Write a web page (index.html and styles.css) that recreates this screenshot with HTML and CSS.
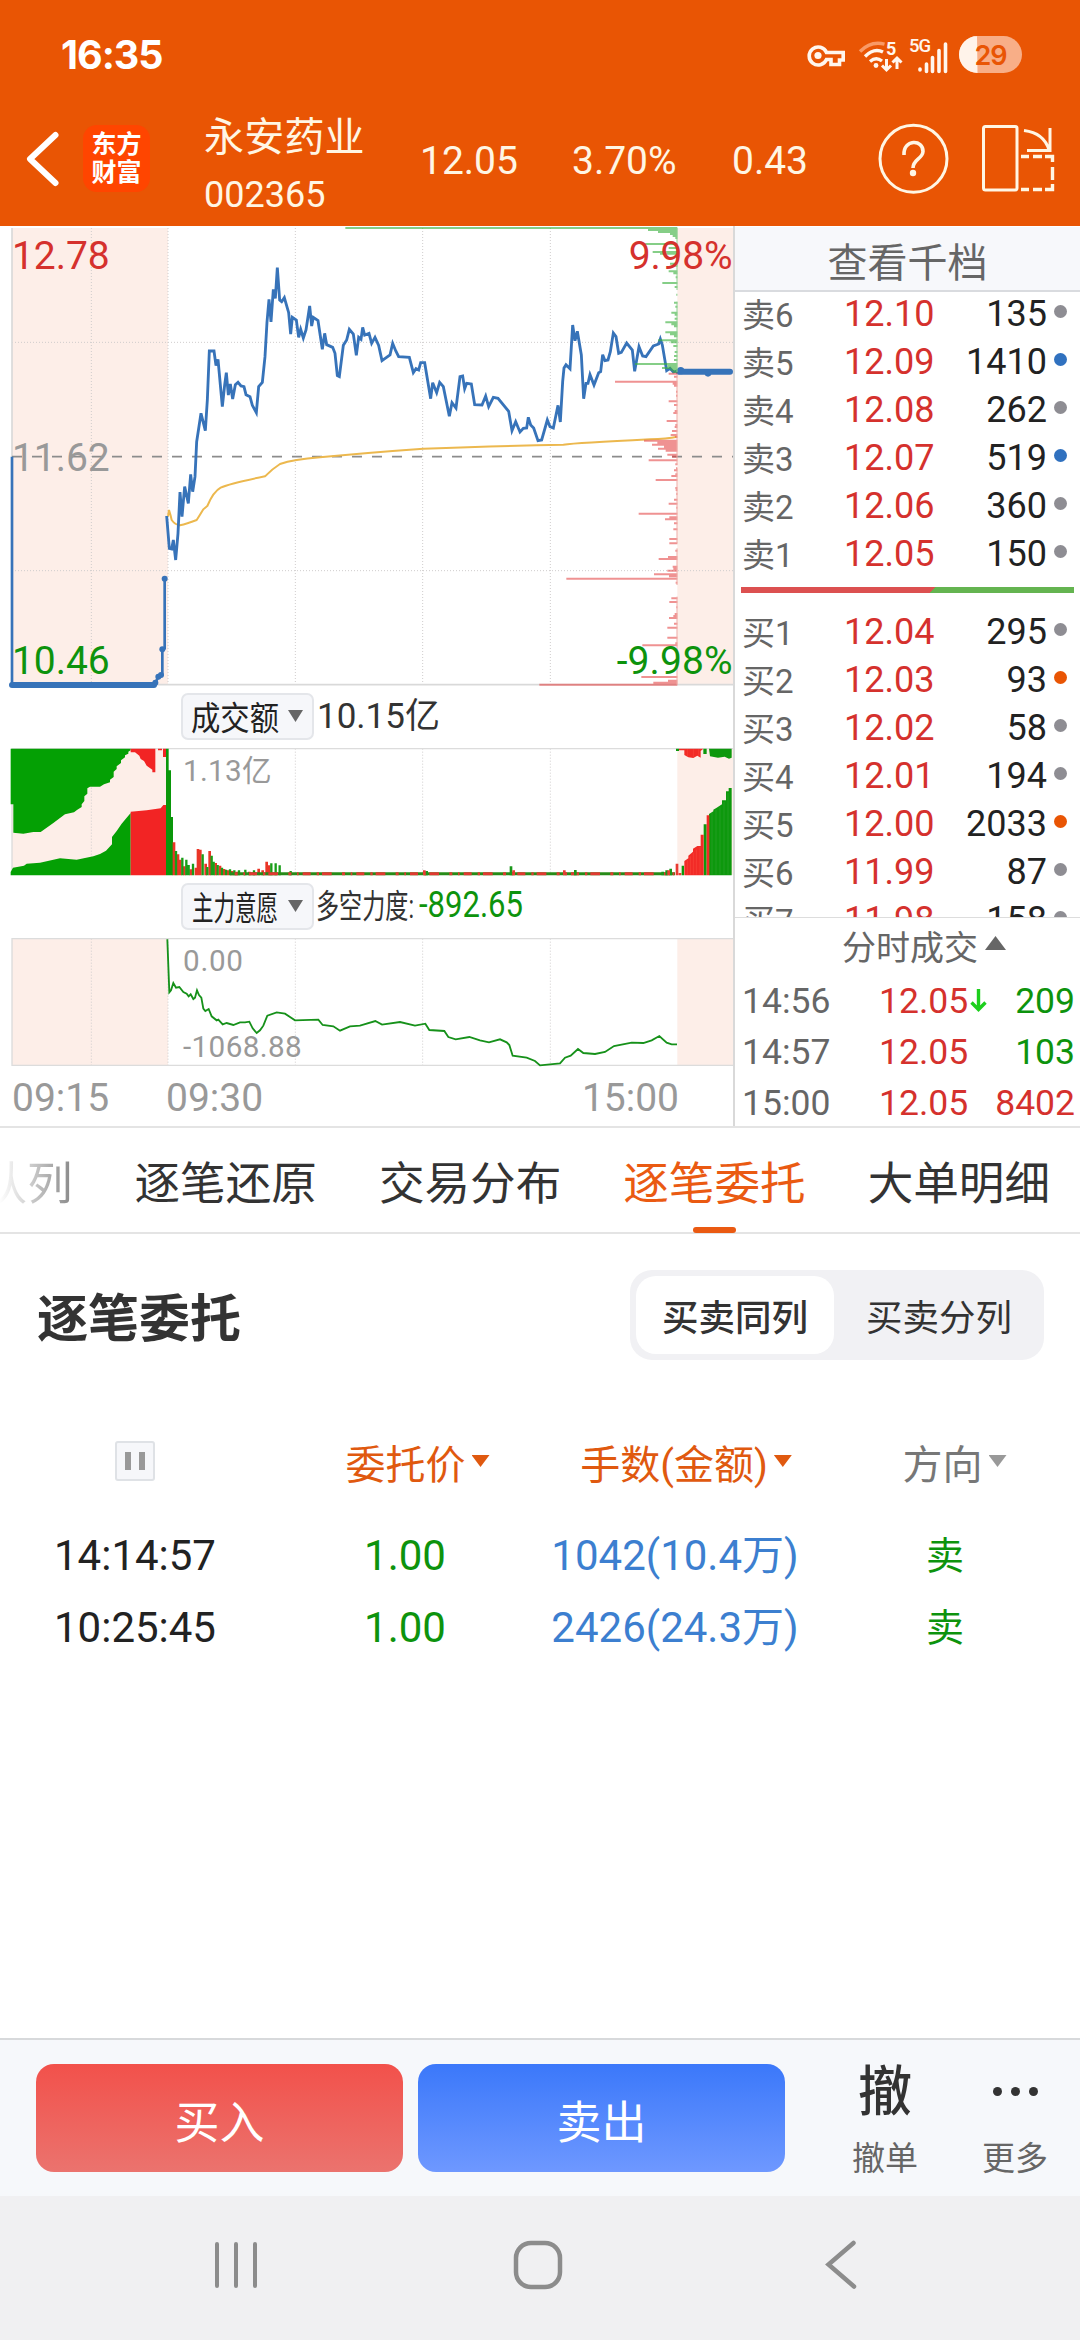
FILE: index.html
```html
<!DOCTYPE html>
<html lang="zh-CN">
<head>
<meta charset="utf-8">
<title>永安药业 002365</title>
<link rel="stylesheet" href="styles.css">
</head>
<body>
<div class="app">
  <header class="header">
    <div class="status">
      <span class="clock">16:35</span>
      <svg class="status-icons" width="220" height="44" viewBox="804 33 220 44">
        <g fill="none" stroke="#fff6ee" stroke-width="3.6">
          <path d="M826.500 52.500A9 9 0 1 0 826.500 59.500H831V64.500H839.500V60H843.200V52.500Z"/>
        </g>
        <circle cx="818" cy="55.500" r="3.600" fill="#fff6ee"/>
        <g fill="none" stroke-width="3.400">
          <path d="M860 51.500Q871 40.500 884.500 44.200" stroke="#f99a66"/>
          <path d="M865 56.500Q874 47.500 883 52" stroke="#fff6ee"/>
          <path d="M870 61.500Q876 56.500 882 61" stroke="#fff6ee"/>
          <path d="M886.500 59V69M882 65.500L886.500 70L891 65.500M897 69V59M892.500 62.500L897 58L901.500 62.500" stroke="#fff6ee" stroke-width="3"/>
        </g>
        <circle cx="876" cy="65.500" r="2.400" fill="#fff6ee"/>
        <g font-family="Roboto,sans-serif" font-weight="700" fill="#fff6ee">
          <text x="886" y="54.500" font-size="18">5</text>
          <text x="909" y="52" font-size="18.500" font-weight="500" textLength="22">5G</text>
        </g>
        <path d="M920 69V70M926.500 64V71.500M932.500 57.500V71.500M939 50.500V71.500M945.500 44V71.500" stroke="#fff6ee" stroke-width="3.600" stroke-linecap="round"/>
        <rect x="959" y="36" width="63" height="37" rx="18.500" fill="#f8ae87"/>
        <path d="M977 36H977.500A18.500 18.500 0 0 0 977.500 73Z" fill="#fff3ea"/>
        <text x="974.500" y="65" font-family="Inter,sans-serif" font-weight="600" font-size="27" fill="#e95504" textLength="33">29</text>
      </svg>
    </div>
    <div class="titlebar">
      <svg class="back" width="36" height="60" viewBox="25 129 36 60"><path d="M55.500 135L30 159L55.500 183" fill="none" stroke="#fff" stroke-width="6" stroke-linecap="round" stroke-linejoin="round"/></svg>
      <div class="logo"><span>东方</span><span>财富</span></div>
      <div class="stock"><span class="stock-name">永安药业</span><span class="stock-code">002365</span></div>
      <div class="quotes"><span class="q1">12.05</span><span class="q2">3.70%</span><span class="q3">0.43</span></div>
      <svg class="head-icons" width="180" height="76" viewBox="876 121 180 76">
        <g fill="none" stroke="#fff6e4" stroke-width="3">
          <circle cx="913.500" cy="158.800" r="33.500"/>
          <path d="M904 155C903 139 923.500 139 923 151.500C922.500 159 913 159 913 168" stroke-width="3.600"/>
          <rect x="983.500" y="126.500" width="33.500" height="63.500" rx="2"/>
          <path d="M1024 130.500Q1044 133 1049 150M1050 128V150.500H1027"/>
          <path d="M1021 156.500H1029M1033 156.500H1042M1045 156.500H1052.500V162M1052.500 167V180M1052.500 184V189.500H1045M1042 189.500H1033M1029 189.500H1021" stroke-width="3.400"/>
        </g>
        <circle cx="913" cy="173" r="3.200" fill="#fff6e4"/>
      </svg>
    </div>
  </header>

  <main class="market">
    <section class="charts">
      <svg class="plot" width="734" height="460" viewBox="0 21 2202 1380">
        <path d="M36 24H504V1394H36ZM2032 24H2199V1394H2032Z" fill="#fdeee8"/>
        <g class="grid"><path d="M274 24V1394M504 24V1394M886 24V1394M1268 24V1394M1651 24V1394M36 367H2199M36 1052H2199"/></g>
        <path d="M36 24V1394H2199" fill="none" stroke="#d9d9d9" stroke-width="5"/>
        <path d="M36 710H2199" stroke="#8c8c8c" stroke-width="5" stroke-dasharray="30 30"/>
        <path d="M504 890L507 870Q512 885 515 900Q525 914 540 916Q560 912 590 900Q600 885 610 868L622 858Q640 815 662 803Q690 790 795 769Q815 748 840 732Q880 718 960 712Q1100 698 1270 686Q1500 678 1690 674Q1730 669 1950 658Q2000 656 2032 650" fill="none" stroke="#ecb84e" stroke-width="6"/>
        <path d="M500 888L508 985L515 987L520 960L527 1020L534 940L540 816L546 890L554 800L565 850L572 763L578 815L585 770L590 665L603 580L616 632L622 540L628 393H642L648 437L654 418L667 560L674 495L679 458L685 525L691 492L698 537L706 494L714 487L723 498L732 500L738 524L750 530L757 556L769 578L776 500L787 487L795 410L801 306L807 238L813 306L820 208L826 235L832 143L839 240L845 245L853 233L866 278L872 342L877 292L889 300L896 352L902 328L910 354L918 330L929 258L935 318L940 292L954 302L967 388L974 340L980 374L998 382L1005 400L1012 467L1018 470L1030 376L1040 360L1048 328L1060 342L1069 406L1076 352L1083 358L1088 322L1094 345L1107 340L1115 370L1125 352L1136 376L1146 422L1170 405L1178 370L1187 392L1196 410L1228 412L1240 458L1248 446L1256 450L1262 428H1274L1292 536L1298 488L1310 518L1319 487L1330 500L1348 589L1356 548L1368 564L1380 470L1388 468L1394 506L1400 490L1414 492L1424 554L1446 555L1457 528L1466 560L1480 532L1494 535L1526 574L1536 632L1547 605L1560 636L1570 625L1580 624L1585 592L1592 615L1601 624L1614 662L1625 660L1642 600L1650 620L1660 624L1674 556L1681 606L1688 485L1692 444L1698 434L1710 446L1718 315L1725 362L1732 334L1744 405L1751 536L1758 490L1764 490L1770 464L1782 495L1796 458L1802 455L1808 404L1815 422L1824 420L1831 395L1840 339L1848 350L1856 400L1864 397L1880 369L1897 390L1904 454L1917 380L1928 408L1938 410L1960 378L1976 372L1981 357L1987 375L2000 452L2010 445L2020 456L2032 453" fill="none" stroke="#3773b9" stroke-width="8.500"/>
        <path d="M36 710V1394H462L476 1370L487 1364V1288L494 1285V1076" fill="none" stroke="#3773b9" stroke-width="8"/>
        <path d="M36 1395H462" stroke="#3773b9" stroke-width="18" stroke-linecap="round"/>
        <g fill="#3773b9"><circle cx="466" cy="1388" r="9"/><circle cx="475" cy="1370" r="9"/><circle cx="483" cy="1365" r="9"/><circle cx="487" cy="1288" r="9"/><circle cx="494" cy="1076" r="9"/><circle cx="2124" cy="460" r="10"/><circle cx="2042" cy="452" r="11"/></g>
        <path d="M2036 455H2190" stroke="#3773b9" stroke-width="18" stroke-linecap="round"/>
        <g fill="none" stroke-width="6">
          <path stroke="#3ab03e" stroke-opacity=".62" d="M2032 24h-996M2032 30h-88M2032 36h-58M2032 42h-22M2032 48h-14M2032 54h-6M2032 72h-97M2032 84h-26M2032 96h-74M2032 101h-52M2032 110h-4M2032 131h-22M2032 137h-8M2032 154h-26M2032 160h-12M2032 172h-5M2032 189h-45M2032 201h-8M2032 224h-3M2032 248h-10M2032 260h-6M2032 278h-18M2032 284h-8M2032 296h-8M2032 307h-36M2032 313h-18M2032 319h-10M2032 337h-36M2032 343h-22M2032 349h-10M2032 361h-58M2032 367h-20M2032 378h-12M2032 396h-8M2032 408h-10M2032 420h-10M2032 432h-127M2032 438h-30M2032 444h-46M2032 450h-20M2032 456h-14"/>
          <path stroke="#e33d3d" stroke-opacity=".56" d="M2032 461h-26M2032 470h-10M2032 485h-187M2032 491h-14M2032 497h-10M2032 515h-4M2032 527h-4M2032 544h-26M2032 555h-10M2032 573h-8M2032 579h-12M2032 603h-32M2032 615h-6M2032 621h-8M2032 633h-16M2032 645h-20M2032 650h-6M2032 662h-100M2032 668h-60M2032 674h-76M2032 680h-40M2032 686h-58M2032 692h-35M2032 704h-30M2032 710h-16M2032 721h-86M2032 733h-6M2032 745h-4M2032 751h-10M2032 763h-6M2032 768h-18M2032 780h-65M2032 804h-6M2032 810h-5M2032 822h-3M2032 839h-10M2032 851h-26M2032 863h-3M2032 881h-116M2032 892h-24M2032 898h-37M2032 910h-10M2032 928h-12M2032 957h-24M2032 970h-24M2032 992h-6M2032 1011h-28M2032 1017h-56M2032 1040h-14M2032 1046h-12M2032 1052h-30M2032 1063h-70M2032 1069h-25M2032 1076h-333M2032 1088h-5M2032 1135h-18M2032 1146h-24M2032 1162h-3M2032 1182h-8M2032 1188h-12M2032 1194h-25M2032 1211h-10M2032 1223h-30M2032 1253h-30M2032 1270h-6M2032 1276h-105M2032 1371h-108M2032 1382h-28M2032 1388h-72M2032 1394h-414"/>
          <path stroke="#eeaaa4" stroke-width="3" d="M2031 461V735M2031 745V970M2031 985V1095M2031 1130V1394"/>
          <path stroke="#8cce8e" stroke-width="3" d="M2031 24V210M2031 245V456"/>
        </g>
        <g class="num" font-size="117">
          <text x="36" y="147" fill="#d5312d" textLength="293">12.78</text>
          <text x="36" y="753" fill="#999" textLength="293">11.62</text>
          <text x="36" y="1361" fill="#0d930d" textLength="293">10.46</text>
          <text x="2198" y="147" fill="#d5312d" text-anchor="end" textLength="312">9.98%</text>
          <text x="2198" y="1361" fill="#0d930d" text-anchor="end" textLength="348">-9.98%</text>
        </g>
      </svg>

      <div class="tool tool-volume">
        <div class="picker">
          <svg width="89" height="45" viewBox="0 0 89 45"><text x="0" y="35" font-size="33" textLength="88" lengthAdjust="spacingAndGlyphs">成交额</text></svg>
          <i class="tri-down"></i>
        </div>
        <span class="amount">10.15亿</span>
      </div>

      <svg class="plot" width="734" height="128" viewBox="0 203 2202 384">
        <path d="M36 205H504V583H36ZM2032 205H2199V583H2032Z" fill="#fdeee8"/>
        <g class="grid"><path d="M274 205V583M886 205V583M1268 205V583M1651 205V583"/></g>
        <path d="M2199 205H36V583" fill="none" stroke="#dcdcdc" stroke-width="4"/>
        <path fill="#04a004" d="M32 205H392V210L385 214V220L375 225V231L363 240V248L350 258V266L341 274V290L330 298V306L312 312L300 319H270L262 324V340L253 348V362L245 372V380L232 388L222 396L195 402L160 428L122 455H100L70 460L40 457V372H32Z"/>
        <path fill="#04a004" d="M32 585V575L39 562L72 556L80 550L120 547L180 534L230 538L280 528L300 521L318 511L336 492V470L350 452L365 430L380 412L392 398V585Z"/>
        <path fill="#f22424" d="M392 585V394L440 390L482 384L490 374H498V585ZM392 205H466V276H457V268L440 256L432 242L422 236L418 226L405 216H392ZM474 205H486V210H474ZM489 205H498V230H489Z"/>
        <path fill="#0a970a" d="M498 205H506V270H513V410H519V585H498Z"/>
        <path stroke="#ea3527" stroke-width="8" d="M522 585V486M534 585V522M541 585V538M553 585V558M572 585V567M588 585V562M594 585V506M601 585V508M617 585V550M629 585V512M647 585V548M660 585V556M672 585V566M684 585V570M696 585V572M710 585V574M748 585V574M776 585V565M788 585V570M800 585V544M807 585V555"/>
        <path stroke="#189e18" stroke-width="7" d="M528 585V512M547 585V532M559 585V538M566 585V554M579 585V550M608 585V522M622 585V560M635 585V526M641 585V544M653 585V554M666 585V562M678 585V568M690 585V567M703 585V570M717 585V570M736 585V568M762 585V570M814 585V549M827 585V549M839 585V555M872 585V572"/>
        <path stroke="#278b18" stroke-width="9" d="M690 580H2025"/>
        <path stroke="#e03931" stroke-width="9" d="M704 580H2030" stroke-dasharray="9 17 5 12 24 18 7 9 29 31"/>
        <path stroke="#1a961a" stroke-width="8" d="M1533 585V558M1280 585V572M1726 585V569M1988 585V574M2000 585V570M2012 585V565"/>
        <path stroke="#e93a32" stroke-width="8" d="M1273 585V570M1541 585V570M1693 585V570M2006 585V570M2031 585V550M2040 585V578"/>
        <path fill="#0d980d" d="M2045 585V556H2052V585ZM2111 585V432H2120V585ZM2127 585V401L2140 393V388L2150 382L2166 372V360H2178V333H2186V323H2195V585ZM2028 205H2037V212H2028ZM2110 205H2120V221H2110ZM2127 205H2195V232L2187 235L2174 229L2154 232L2130 228Z"/>
        <path fill="#f22b26" d="M2053 585V542L2065 534V526L2079 514V505L2092 497H2102V463H2111V585ZM2120 405H2128V585H2120ZM2037 205H2110L2102 212V232L2092 226L2080 233L2065 231L2053 224V210H2037Z"/>
        <path stroke="#ff6a57" stroke-opacity=".55" stroke-width="1.500" d="M2062 540V583M2071 528V583M2080 518V583M2089 508V583M2100 500V583M2062 207V229M2080 207V231M2096 207V226"/>
        <path stroke="#58b457" stroke-opacity=".55" stroke-width="1.500" d="M2136 396V583M2148 388V583M2160 381V583M2172 365V583M2184 338V583"/>
        <text class="num" x="549" y="303" fill="#999" font-size="89" textLength="266">1.13亿</text>
      </svg>

      <div class="tool tool-force">
        <div class="picker">
          <svg width="89" height="45" viewBox="0 0 89 45"><text x="1" y="35" font-size="33.500" textLength="86" lengthAdjust="spacingAndGlyphs">主力意愿</text></svg>
          <i class="tri-down"></i>
        </div>
        <svg class="force" width="102" height="46" viewBox="0 0 102 46"><text x="1" y="33" font-size="33.500" textLength="98" lengthAdjust="spacingAndGlyphs">多空力度:</text></svg>
        <svg class="force-value" width="108" height="46" viewBox="0 0 108 46"><text x="1" y="33" font-size="36" textLength="104" lengthAdjust="spacingAndGlyphs">-892.65</text></svg>
      </div>

      <svg class="plot" width="734" height="129" viewBox="0 773 2202 387">
        <path d="M36 775H504V1155H36ZM2032 775H2199V1155H2032Z" fill="#fdeee8"/>
        <g class="grid"><path d="M274 775V1155M504 775V1155M886 775V1155M1268 775V1155M1651 775V1155"/></g>
        <path d="M2199 775H36V1155H2199" fill="none" stroke="#dcdcdc" stroke-width="4"/>
        <path d="M502 777L508 936L513 930L520 908L528 922L538 920L550 935L560 940L566 948L572 942L580 956L585 952L591 930L597 944L604 952L610 985L616 992L626 986L635 1008L650 1020L655 1018L668 1032L680 1028L700 1034L720 1026L735 1026L748 1024L758 1044L770 1058L780 1050L790 1036L802 1006L830 996L855 1000L885 1020L955 1018L968 1034L1000 1038L1020 1051L1050 1038L1080 1036L1126 1022L1146 1033L1200 1025L1245 1036L1276 1030L1288 1049L1333 1052L1345 1070L1367 1077L1408 1070L1440 1080L1467 1086L1500 1077L1520 1086L1528 1094L1538 1126L1580 1132L1605 1142L1620 1155L1680 1149L1695 1132L1712 1126L1734 1106L1750 1118L1785 1121L1815 1115L1842 1097L1895 1087L1930 1088L1955 1080L1978 1067L2000 1087L2015 1092H2031" fill="none" stroke="#16911a" stroke-width="5.500"/>
        <g class="num" font-size="89" fill="#999"><text x="549" y="873" textLength="180">0.00</text><text x="549" y="1131" textLength="356">-1068.88</text></g>
      </svg>
      <div class="axis"><span>09:15</span><span class="t930">09:30</span><span class="t1500">15:00</span></div>
    </section>

    <aside class="book">
      <div class="book-head">查看千档</div>
      <div class="levels">
        <div class="lv"><span>卖6</span><b>12.10</b><em>135</em><i></i></div>
        <div class="lv"><span>卖5</span><b>12.09</b><em>1410</em><i class="blue"></i></div>
        <div class="lv"><span>卖4</span><b>12.08</b><em>262</em><i></i></div>
        <div class="lv"><span>卖3</span><b>12.07</b><em>519</em><i class="blue"></i></div>
        <div class="lv"><span>卖2</span><b>12.06</b><em>360</em><i></i></div>
        <div class="lv"><span>卖1</span><b>12.05</b><em>150</em><i></i></div>
        <div class="ratio"></div>
        <div class="lv"><span>买1</span><b>12.04</b><em>295</em><i></i></div>
        <div class="lv"><span>买2</span><b>12.03</b><em>93</em><i class="orange"></i></div>
        <div class="lv"><span>买3</span><b>12.02</b><em>58</em><i></i></div>
        <div class="lv"><span>买4</span><b>12.01</b><em>194</em><i></i></div>
        <div class="lv"><span>买5</span><b>12.00</b><em>2033</em><i class="orange"></i></div>
        <div class="lv"><span>买6</span><b>11.99</b><em>87</em><i></i></div>
        <div class="lv"><span>买7</span><b>11.98</b><em>158</em><i></i></div>
      </div>
      <div class="deals-head">分时成交<i class="tri-up"></i></div>
      <div class="deals">
        <div class="deal"><span>14:56</span><b>12.05</b><svg width="17" height="24" viewBox="0 0 17 24"><path d="M8.500 1V21M1.500 14.500L8.500 21.500L15.500 14.500" fill="none" stroke="#1ccf1c" stroke-width="3.400"/></svg><em class="down">209</em></div>
        <div class="deal"><span>14:57</span><b>12.05</b><em class="down">103</em></div>
        <div class="deal"><span>15:00</span><b>12.05</b><em class="up">8402</em></div>
      </div>
    </aside>
  </main>

  <nav class="tabs">
    <span class="tab cut">队列</span><span class="tab">逐笔还原</span><span class="tab">交易分布</span><span class="tab active">逐笔委托</span><span class="tab">大单明细</span>
  </nav>

  <section class="orders">
    <div class="orders-head">
      <h2>逐笔委托</h2>
      <div class="segment"><span class="on">买卖同列</span><span>买卖分列</span></div>
    </div>
    <div class="row cols">
      <span><i class="pause"></i></span>
      <span class="sort">委托价<i></i></span>
      <span class="sort">手数(金额)<i></i></span>
      <span class="sort gray">方向<i></i></span>
    </div>
    <div class="row"><span>14:14:57</span><span class="green">1.00</span><span class="blue-text">1042(10.4万)</span><span class="green side">卖</span></div>
    <div class="row"><span>10:25:45</span><span class="green">1.00</span><span class="blue-text">2426(24.3万)</span><span class="green side">卖</span></div>
  </section>

  <footer class="actions">
    <div class="btn buy">买入</div>
    <div class="btn sell">卖出</div>
    <div class="act act-cancel"><span class="act-icon">撤</span><span>撤单</span></div>
    <div class="act"><span class="act-icon dots"><i></i><i></i><i></i></span><span>更多</span></div>
  </footer>
  <div class="sysnav">
    <svg width="1080" height="144" viewBox="0 2196 1080 144">
      <g fill="none" stroke="#8c8c8c" stroke-width="4" stroke-linecap="round">
        <path d="M217 2244V2286M236 2244V2286M255 2244V2286"/>
        <rect x="516" y="2243" width="44" height="44" rx="15" stroke-width="4.500"/>
        <path d="M853.500 2243L828.500 2264.500L854 2286.500" stroke-width="4.500"/>
      </g>
    </svg>
  </div>
</div>
</body>
</html>
```

FILE: styles.css
```css
* { box-sizing: border-box; }
body { margin: 0; font-family: Roboto, "Noto Sans CJK SC", sans-serif; background: #fff; color: #222; }
i, em { font-style: normal; }
b { font-weight: 400; }
svg { display: block; }
.app { width: 1080px; height: 2340px; display: flex; flex-direction: column; overflow: hidden; white-space: nowrap; }

/* header */
.header { height: 226px; background: #e95504; color: #fff6e4; }
.status { height: 92px; padding: 33px 56px 0 61px; display: flex; justify-content: space-between; align-items: flex-start; }
.clock { font: 700 39.500px/44px Inter, sans-serif; color: #fff; letter-spacing: -1px; }
.titlebar { height: 134px; display: flex; align-items: flex-start; padding-left: 25px; }
.back { margin-top: 37px; }
.logo { margin: 33px 0 0 22px; width: 67px; height: 67px; border-radius: 14px; background: #ff4500; color: #fff; font-weight: 700; font-size: 25px; line-height: 28px; display: flex; flex-direction: column; align-items: center; justify-content: center; }
.stock { margin: 21px 0 0 54px; width: 216px; display: flex; flex-direction: column; }
.stock-name { font-size: 40px; line-height: 50px; letter-spacing: .2px; }
.stock-code { font-size: 36px; line-height: 44px; margin-top: 10px; }
.quotes { width: 456px; display: flex; font-size: 39px; line-height: 46px; margin-top: 46px; }
.q1 { width: 152px; }
.q2 { width: 160px; }
.head-icons { margin-top: 29px; }

/* market area */
.market { display: flex; height: 902px; border-bottom: 2px solid #e4e4e4; }
.charts { width: 735px; border-right: 2px solid #d9d9d9; padding-top: 1px; flex: none; }
.plot { overflow: visible; }
.grid { fill: none; stroke: #cfcccc; stroke-width: 3; stroke-dasharray: 3 6; }
.num, .tool text { font-family: Roboto, "Noto Sans CJK SC", sans-serif; }
.tool { display: flex; align-items: flex-start; padding-left: 181px; }
.tool-volume { height: 61px; padding-top: 6px; }
.tool-force { height: 62px; padding-top: 7px; }
.picker { width: 133px; height: 47px; flex: none; border: 2px solid #e4e6ea; border-radius: 7px; background: #f6f7fa; display: flex; align-items: flex-start; padding: 0 0 0 8px; gap: 8px; }
.picker svg, .force { overflow: visible; }
.picker text { fill: #222; }
.tri-down { margin-top: 15px; width: 15px; height: 12px; background: #666; clip-path: polygon(0 0, 100% 0, 50% 100%); }
.amount { margin-left: 3px; font-size: 35px; line-height: 48px; color: #333; }
.force { margin-left: 1px; margin-top: 2px; }
.force text { fill: #333; }
.force-value { margin: 1px 0 0 1px; }
.force-value text { fill: #0d930d; }
.axis { display: flex; color: #999; font-size: 39px; line-height: 46px; padding: 8px 0 0 12px; }
.axis span { width: 154px; }
.axis .t1500 { margin-left: 161px; text-align: right; width: 198px; }

/* order book */
.book { flex: 1; padding-top: 1px; }
.book-head { height: 65px; background: #f7f8fb; border-bottom: 2px solid #d9dbdf; text-align: center; font-size: 40px; line-height: 73px; color: #666; }
.levels { height: 625px; overflow: hidden; }
.lv { height: 48px; display: grid; grid-template-columns: 102px 120px 1fr 33px; padding-left: 7px; font-size: 36px; line-height: 44px; }
.lv span { font-size: 33px; line-height: 48px; color: #666; }
.lv b { color: #d5312d; }
.lv em { text-align: right; color: #222; }
.lv i { margin: 13px 0 0 7px; width: 13px; height: 13px; border-radius: 50%; background: #8e8d93; }
.lv .blue { background: #3071bf; }
.lv .orange { background: #e95504; }
.ratio { height: 6px; margin: 7px 6px 17px 6px; background: linear-gradient(135deg, #dc5050 57.5%, #64b450 57.5%); }
.deals-head { height: 63px; border-top: 1px solid #ddd; display: flex; align-items: flex-start; padding-left: 107px; color: #666; font-size: 34px; line-height: 60px; }
.tri-up { margin: 18px 0 0 7px; width: 21px; height: 14px; background: #666; clip-path: polygon(50% 0, 100% 100%, 0 100%); }
.deal { height: 51px; display: grid; grid-template-columns: 137px 89px 20px 1fr; padding: 0 5px 0 7px; font-size: 35.500px; line-height: 43px; color: #666; }
.deal b { color: #d5312d; }
.deal svg { margin: 8px 0 0 2px; }
.deal em { grid-column: 4; text-align: right; }
.deal .down { color: #0d930d; }
.deal .up { color: #d5312d; }

/* tabs */
.tabs { height: 106px; border-bottom: 2px solid #e4e4e4; display: flex; justify-content: flex-end; gap: 62px; padding-right: 30px; font-size: 45.600px; line-height: 114px; color: #333; flex: none; }
.tab { position: relative; flex: none; height: 105px; }
.cut { background: linear-gradient(90deg, #fff 20%, #888 100%); background-clip: text; -webkit-background-clip: text; color: transparent; }
.active { color: #ea5a12; }
.active::after { content: ""; position: absolute; left: 70px; bottom: 0; width: 43px; height: 6px; border-radius: 3px; background: #ea5a12; }

/* order list */
.orders { height: 804px; flex: none; }
.orders-head { display: flex; justify-content: space-between; padding: 36px 36px 0 37px; height: 126px; }
h2 { margin: 0; font-size: 51px; line-height: 100px; color: #333; font-weight: 700; }
.segment { width: 414px; height: 90px; border-radius: 22px; background: #f1f1f4; padding: 6px; display: flex; font-size: 36.500px; line-height: 86px; color: #333; text-align: center; }
.segment span { flex: 1; height: 78px; padding-left: 6px; }
.segment .on { background: #fff; border-radius: 20px; flex: none; width: 198px; font-weight: 500; padding-left: 0; }
.row { display: grid; grid-template-columns: 270px 270px 270px 270px; height: 72px; text-align: center; font-size: 42px; line-height: 72px; }
.row > span:nth-child(3) { margin: 0 -5px; }
.orders .cols { font-size: 40px; margin-top: 69px; margin-bottom: 18px; height: 73px; line-height: 74px; }
.sort { color: #e0590f; display: flex; justify-content: center; align-items: flex-start; gap: 6px; padding-left: 25px; }
.cols .sort:nth-child(3) { padding-left: 22px; }
.cols .sort.gray { padding-left: 19px; }
.sort i { margin-top: 26px; width: 18px; height: 12px; background: #e0590f; clip-path: polygon(0 0, 100% 0, 50% 100%); }
.sort.gray { color: #777; }
.gray i { background: #999; }
.pause { display: block; width: 40px; height: 40px; margin: 12px auto 0; border: 2px solid #dfe2e6; border-radius: 3px; background: linear-gradient(90deg, transparent 8px, #999 8px 14px, transparent 14px 22px, #999 22px 28px, transparent 28px) center / 100% 18px no-repeat, #f6f7fa; }
.green { color: #0d930d; }
.blue-text { color: #3c7fd0; }
.row .side { font-size: 38px; }

/* footer */
.actions { height: 158px; flex: none; border-top: 2px solid #d7d9db; background: #f6f8fb; padding: 24px 0 0 36px; display: flex; }
.btn { width: 367px; height: 108px; border-radius: 18px; color: #fff; font-size: 45px; line-height: 120px; text-align: center; margin-right: 15px; }
.buy { background: linear-gradient(#f2514b, #eb736e); }
.sell { background: linear-gradient(#3b78fa, #6e98ff); }
.act { width: 130px; display: flex; flex-direction: column; align-items: center; font-size: 33px; line-height: 44px; color: #666; }
.act-cancel { margin-left: 20px; }
.act-icon { height: 73px; font-size: 54px; line-height: 57px; font-weight: 500; color: #333; }
.dots { display: flex; gap: 9px; padding-top: 23px; }
.dots i { width: 9px; height: 9px; border-radius: 50%; background: #333; }
.sysnav { height: 144px; background: #f0f0f2; flex: none; }
```
